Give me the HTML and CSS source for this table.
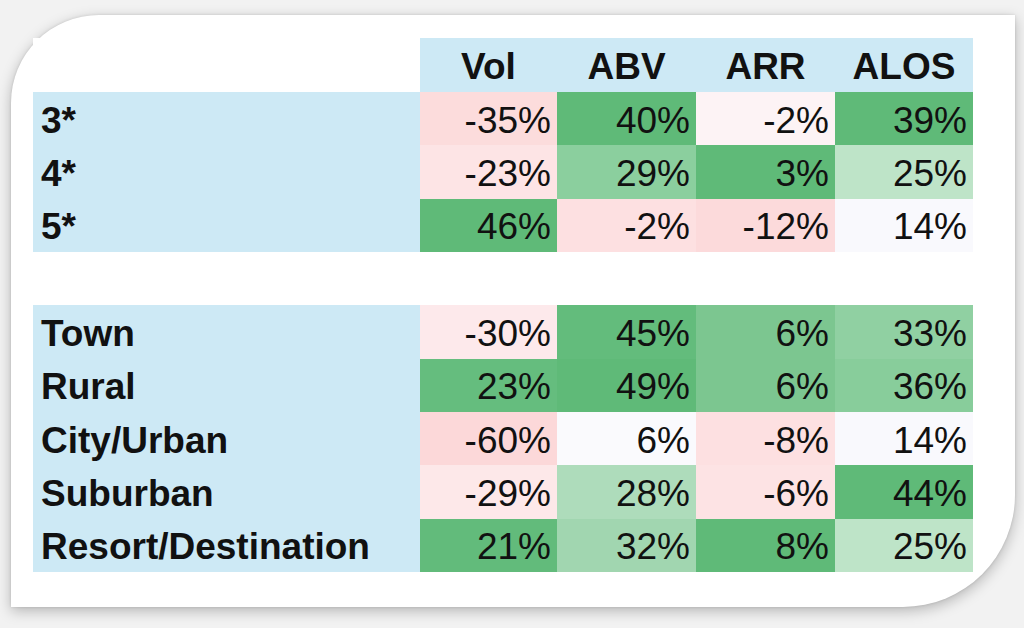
FILE: index.html
```html
<!DOCTYPE html>
<html>
<head>
<meta charset="utf-8">
<link rel="stylesheet" href="styles.css">
</head>
<body>
<div class="card">
  <div class="grid">
    <div class="corner"></div>
    <div class="hd">Vol</div><div class="hd">ABV</div><div class="hd">ARR</div><div class="hd">ALOS</div>

    <div class="lb">3*</div>
    <div class="c" style="background:#fcdcdc">-35%</div>
    <div class="c" style="background:#5fba78">40%</div>
    <div class="c" style="background:#fdf3f5">-2%</div>
    <div class="c" style="background:#5fba78">39%</div>

    <div class="lb">4*</div>
    <div class="c" style="background:#fde4e5">-23%</div>
    <div class="c" style="background:#8bcf9e">29%</div>
    <div class="c" style="background:#5fba78">3%</div>
    <div class="c" style="background:#bee4c8">25%</div>

    <div class="lb">5*</div>
    <div class="c" style="background:#5fba78">46%</div>
    <div class="c" style="background:#fde0e1">-2%</div>
    <div class="c" style="background:#fcdadb">-12%</div>
    <div class="c" style="background:#f9f9fd">14%</div>

    <div class="blank"></div>

    <div class="lb">Town</div>
    <div class="c" style="background:#fde9eb">-30%</div>
    <div class="c" style="background:#63bc7c">45%</div>
    <div class="c" style="background:#7cc690">6%</div>
    <div class="c" style="background:#90d0a2">33%</div>

    <div class="lb">Rural</div>
    <div class="c" style="background:#65bd7e">23%</div>
    <div class="c" style="background:#5fba78">49%</div>
    <div class="c" style="background:#7cc690">6%</div>
    <div class="c" style="background:#88cd9b">36%</div>

    <div class="lb">City/Urban</div>
    <div class="c" style="background:#fcd8d9">-60%</div>
    <div class="c" style="background:#fafafd">6%</div>
    <div class="c" style="background:#fde0e1">-8%</div>
    <div class="c" style="background:#f9f9fd">14%</div>

    <div class="lb">Suburban</div>
    <div class="c" style="background:#fde8e9">-29%</div>
    <div class="c" style="background:#aedcbb">28%</div>
    <div class="c" style="background:#fde3e4">-6%</div>
    <div class="c" style="background:#5fba78">44%</div>

    <div class="lb">Resort/Destination</div>
    <div class="c" style="background:#62bb7b">21%</div>
    <div class="c" style="background:#a1d6b0">32%</div>
    <div class="c" style="background:#5fba78">8%</div>
    <div class="c" style="background:#bee4c8">25%</div>
  </div>
</div>
</body>
</html>
```

FILE: styles.css
```css
html, body {
  margin: 0;
  padding: 0;
  width: 1024px;
  height: 628px;
  overflow: hidden;
  background: #f2f2f2;
}
body {
  padding: 15px 9px 0 11px;
  box-sizing: border-box;
  font-family: "Liberation Sans", Arial, sans-serif;
  color: #111;
}
.card {
  width: 1004px;
  height: 592px;
  box-sizing: border-box;
  background: #fff;
  border-radius: 88px 0 112px 0;
  box-shadow: 0 4px 14px rgba(0,0,0,0.25), 0 0 3px rgba(0,0,0,0.12);
  padding: 23px 0 0 22px;
}
.grid {
  display: grid;
  grid-template-columns: 387px 137px 139px 139px 138px;
  grid-template-rows: 54px repeat(9, 53.33px);
  font-size: 37px;
  line-height: 1;
}
.corner { background: #fff; }
.blank { grid-column: 1 / -1; background: #fff; }
.hd {
  background: #cde9f5;
  font-weight: bold;
  display: flex;
  align-items: center;
  justify-content: center;
  padding-top: 3px;
}
.lb {
  background: #cde9f5;
  font-weight: bold;
  display: flex;
  align-items: center;
  padding-left: 8px;
  padding-top: 3px;
}
.c {
  display: flex;
  align-items: center;
  justify-content: flex-end;
  padding-right: 6px;
  padding-top: 3px;
}
```
